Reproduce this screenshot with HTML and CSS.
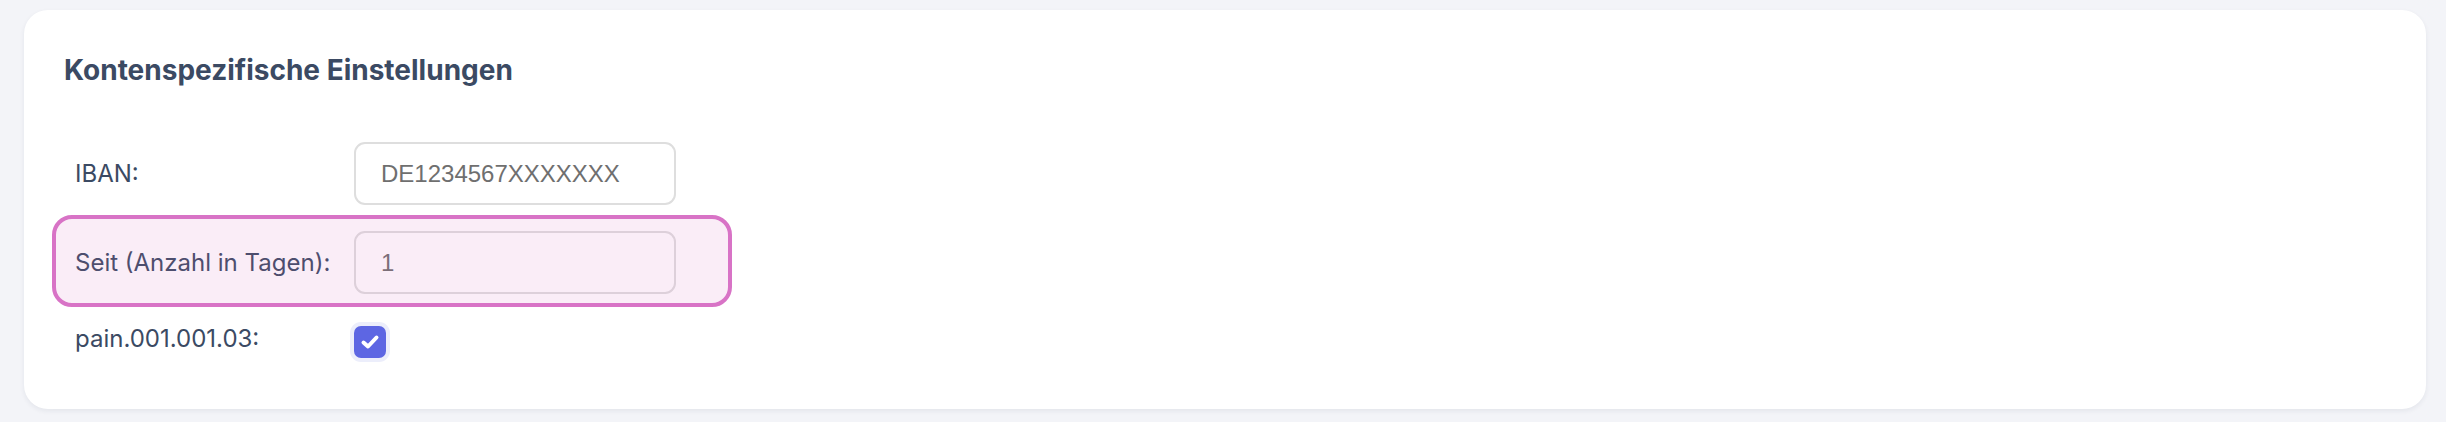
FILE: index.html
```html
<!DOCTYPE html>
<html lang="de">
<head>
<meta charset="utf-8">
<title>Kontenspezifische Einstellungen</title>
<link rel="stylesheet" href="styles.css">
</head>
<body>
<section class="card">
  <h2 class="card-title">Kontenspezifische Einstellungen</h2>
  <div class="form">
    <div class="row">
      <label class="row-label" for="iban">IBAN:</label>
      <input class="text-input" id="iban" type="text" value="DE1234567XXXXXXX">
    </div>
    <div class="row">
      <label class="row-label" for="seit">Seit (Anzahl in Tagen):</label>
      <input class="text-input" id="seit" type="text" value="1">
      <div class="highlight"></div>
    </div>
    <div class="row">
      <span class="row-label">pain.001.001.03:</span>
      <span class="checkbox" role="checkbox" aria-checked="true">
        <svg viewBox="0 0 32 32" width="32" height="32"><path d="M9.5 16.5 L14 20.5 L22.5 11.5" fill="none" stroke="#fff" stroke-width="4" stroke-linecap="round" stroke-linejoin="round"/></svg>
      </span>
    </div>
  </div>
</section>
</body>
</html>
```

FILE: styles.css
```css
html, body {
  margin: 0;
  padding: 0;
}
body {
  background: #f3f4f8;
  padding: 10px 20px 13px 24px;
  font-family: Inter, "Noto Sans", sans-serif;
  color: #3b4a63;
}
.card {
  background: #ffffff;
  border-radius: 24px;
  box-shadow: 0 2px 5px rgba(30, 40, 70, 0.07);
  padding: 40px 40px 40px 40px;
  box-sizing: border-box;
  height: 399px;
}
.card-title {
  margin: 0;
  font-size: 28px;
  line-height: 40px;
  font-weight: 700;
  color: #3b4a63;
}
.form {
  margin-top: 39px;
  display: flex;
  flex-direction: column;
}
.row {
  position: relative;
  display: flex;
  align-items: center;
  padding: 13px 0 13px 11px;
}
.row-label {
  width: 279px;
  flex: none;
  font-size: 24px;
  line-height: 36px;
  color: #3b4a63;
}
.text-input {
  box-sizing: border-box;
  width: 322px;
  height: 63px;
  border: 2px solid #dedede;
  border-radius: 11px;
  background: transparent;
  padding: 0 0 0 25px;
  font-family: "Liberation Sans", Arial, sans-serif;
  font-size: 24px;
  color: #6f6f6f;
  outline: none;
}
.highlight {
  position: absolute;
  left: -12px;
  top: -3px;
  bottom: 0;
  width: 680px;
  box-sizing: border-box;
  border: 4px solid #d873c6;
  border-radius: 20px;
  background: rgba(214, 110, 190, 0.12);
  pointer-events: none;
}
.checkbox {
  width: 32px;
  height: 32px;
  border-radius: 7px;
  background: #5d66e3;
  box-shadow: 0 0 0 4px #eceefb;
  display: flex;
  margin-top: 6px;
}
.checkbox svg {
  display: block;
}
```
